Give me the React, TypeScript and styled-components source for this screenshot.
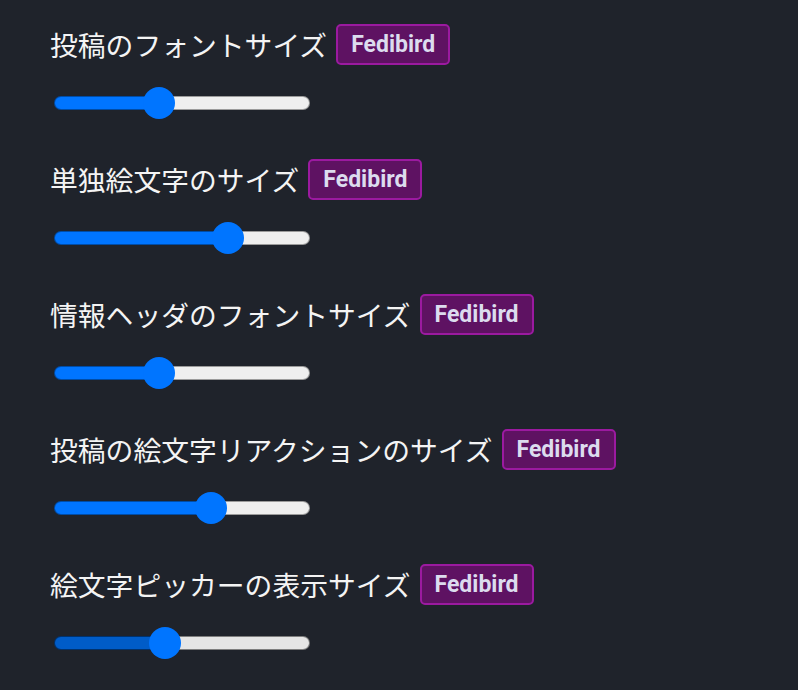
import React from 'react';
import styled, { createGlobalStyle } from 'styled-components';

const GlobalStyle = createGlobalStyle`
  html, body {
    margin: 0;
    padding: 0;
    background: #1f232b;
  }
`;

const Page = styled.div`
  min-height: 690px;
  box-sizing: border-box;
  padding: 24px 0 0 50px;
  background: #1f232b;
  font-family: "Noto Sans CJK JP", "Noto Sans", sans-serif;
`;

const Group = styled.div`
  display: flex;
  flex-direction: column;
  align-items: flex-start;
  margin-bottom: 40px;
`;

const LabelRow = styled.div`
  display: flex;
  align-items: center;
  gap: 9px;
  height: 41px;
`;

const Label = styled.span`
  color: #f4f4f4;
  font-size: 27.8px;
  line-height: 1;
`;

const Badge = styled.span`
  display: inline-flex;
  align-items: center;
  box-sizing: border-box;
  height: 41px;
  padding: 0 13px;
  border: 2px solid #9b1aa0;
  border-radius: 5px;
  background: #5e1262;
  color: #dcdcee;
  font-family: Roboto, "Liberation Sans", sans-serif;
  font-weight: 700;
  font-size: 23px;
`;

const Range = styled.input<{ $hover?: boolean }>`
  -webkit-appearance: none;
  appearance: none;
  display: block;
  width: 256px;
  height: 32px;
  margin: 22px 0 0 4px;
  padding: 0;
  background: transparent;
  cursor: pointer;

  &::-webkit-slider-runnable-track {
    box-sizing: border-box;
    height: 14px;
    border-radius: 7px;
    border: 1.5px solid ${p => (p.$hover ? 'rgba(0,0,0,0.45)' : 'rgba(0,0,0,0.35)')};
    background-origin: border-box;
    background-image: linear-gradient(
      to right,
      ${p => (p.$hover ? '#005cc8' : '#0075ff')} 0,
      ${p => (p.$hover ? '#005cc8' : '#0075ff')} var(--fill),
      ${p => (p.$hover ? '#e5e5e5' : '#efefef')} var(--fill)
    );
  }

  &::-webkit-slider-thumb {
    -webkit-appearance: none;
    appearance: none;
    width: 32px;
    height: 32px;
    margin-top: -10.5px;
    border: none;
    border-radius: 50%;
    background: #0075ff;
  }
`;

interface Setting {
  label: string;
  value: number;
  hover?: boolean;
}

const settings: Setting[] = [
  { label: '投稿のフォントサイズ', value: 0.397 },
  { label: '単独絵文字のサイズ', value: 0.705 },
  { label: '情報ヘッダのフォントサイズ', value: 0.397 },
  { label: '投稿の絵文字リアクションのサイズ', value: 0.63 },
  { label: '絵文字ピッカーの表示サイズ', value: 0.424, hover: true },
];

function App() {
  return (
    <Page>
      <GlobalStyle />
      {settings.map((s, i) => (
        <Group key={i}>
          <LabelRow>
            <Label>{s.label}</Label>
            <Badge>Fedibird</Badge>
          </LabelRow>
          <Range
            type="range"
            min={0}
            max={1000}
            defaultValue={Math.round(s.value * 1000)}
            $hover={s.hover}
            style={{ ['--fill' as string]: `${16 + s.value * 224}px` } as React.CSSProperties}
          />
        </Group>
      ))}
    </Page>
  );
}

export default App;
